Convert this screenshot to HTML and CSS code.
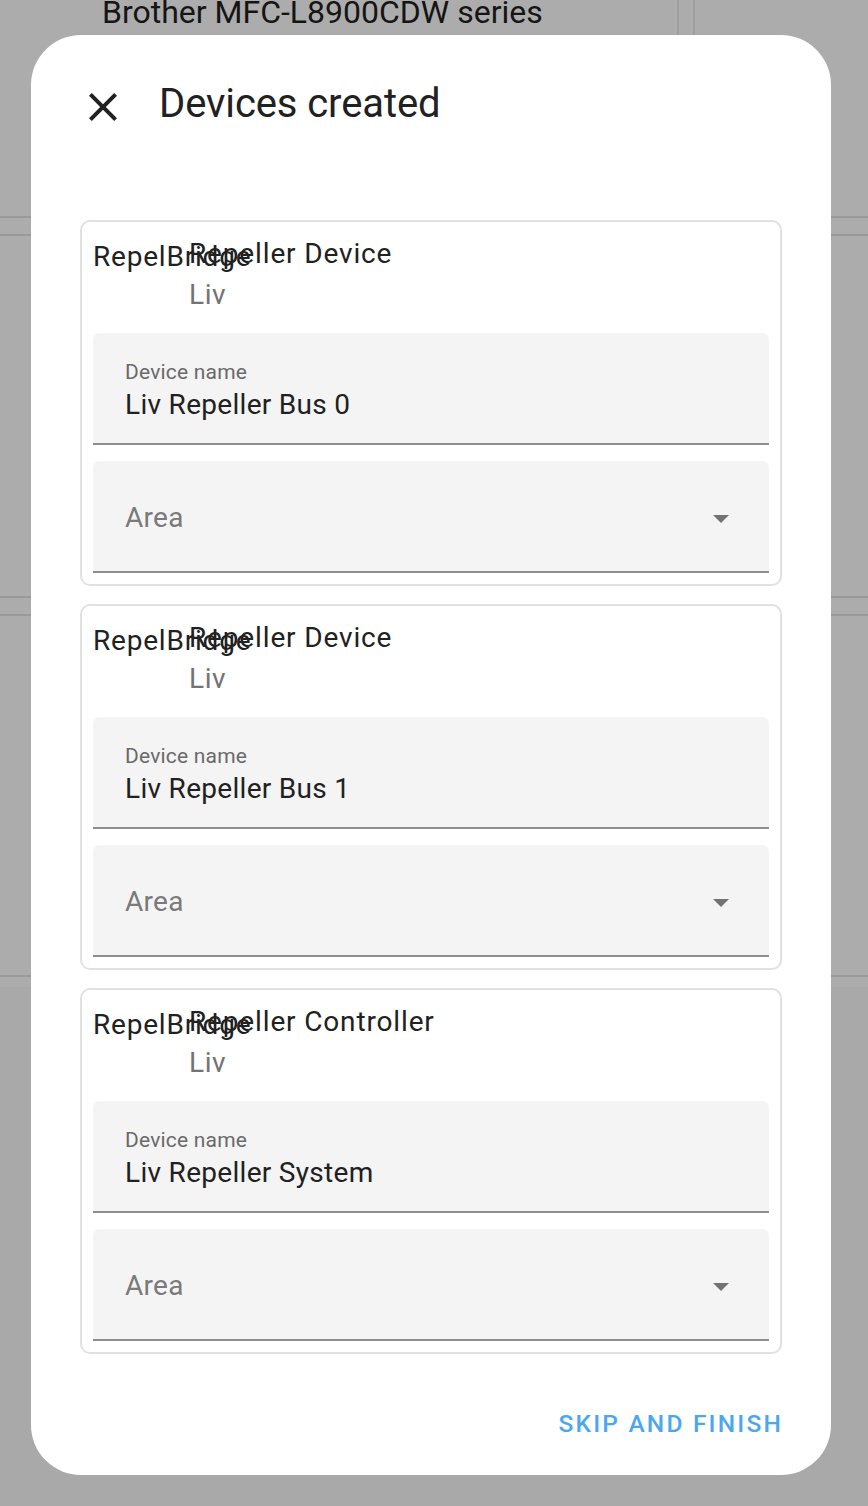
FILE: index.html
```html
<!DOCTYPE html>
<html lang="en">
<head>
<meta charset="utf-8">
<title>Devices created</title>
<link rel="stylesheet" href="styles.css">
</head>
<body>
<div class="page">
  <div class="bg-top">
    <div class="bg-cell-main"><span class="bg-title">Brother MFC-L8900CDW series</span></div>
    <div class="bg-cell-gap"></div>
    <div class="bg-cell-rest"></div>
  </div>
  <div class="bg-spacer"></div>
  <div class="bg-block bg-block-a"></div>
  <div class="bg-spacer"></div>
  <div class="bg-block bg-block-b"></div>
  <div class="bg-rest"></div>
</div>

<div class="dialog">
  <div class="dialog-header">
    <svg class="close-icon" viewBox="0 0 24 24" width="48" height="48"><path d="M19,6.41L17.59,5L12,10.59L6.41,5L5,6.41L10.59,12L5,17.59L6.41,19L12,13.41L17.59,19L19,17.59L13.41,12L19,6.41Z"/></svg>
    <h2 class="dialog-title">Devices created</h2>
  </div>

  <div class="dialog-content">
    <div class="device-card">
      <div class="card-head">
        <div class="graphic">RepelBridge</div>
        <div class="head-text">
          <div class="primary">Repeller Device</div>
          <div class="secondary">Liv</div>
        </div>
      </div>
      <div class="field">
        <div class="field-label">Device name</div>
        <div class="field-value">Liv Repeller Bus 0</div>
      </div>
      <div class="field field-select">
        <div class="select-label">Area</div>
        <svg class="caret" viewBox="0 0 16 8" width="16" height="8"><polygon points="0,0 16,0 8,8"/></svg>
      </div>
    </div>

    <div class="device-card">
      <div class="card-head">
        <div class="graphic">RepelBridge</div>
        <div class="head-text">
          <div class="primary">Repeller Device</div>
          <div class="secondary">Liv</div>
        </div>
      </div>
      <div class="field">
        <div class="field-label">Device name</div>
        <div class="field-value">Liv Repeller Bus 1</div>
      </div>
      <div class="field field-select">
        <div class="select-label">Area</div>
        <svg class="caret" viewBox="0 0 16 8" width="16" height="8"><polygon points="0,0 16,0 8,8"/></svg>
      </div>
    </div>

    <div class="device-card">
      <div class="card-head">
        <div class="graphic">RepelBridge</div>
        <div class="head-text">
          <div class="primary">Repeller Controller</div>
          <div class="secondary">Liv</div>
        </div>
      </div>
      <div class="field">
        <div class="field-label">Device name</div>
        <div class="field-value">Liv Repeller System</div>
      </div>
      <div class="field field-select">
        <div class="select-label">Area</div>
        <svg class="caret" viewBox="0 0 16 8" width="16" height="8"><polygon points="0,0 16,0 8,8"/></svg>
      </div>
    </div>
  </div>

  <div class="dialog-actions">
    <button class="text-button">SKIP AND FINISH</button>
  </div>
</div>
</body>
</html>
```

FILE: styles.css
```css
* { box-sizing: border-box; }

html, body {
  margin: 0;
  padding: 0;
}

body {
  width: 868px;
  height: 1506px;
  overflow: hidden;
  background: #a9a9a9;
  font-family: Roboto, "Noto Sans", sans-serif;
  position: relative;
}

/* ---------- background page (dimmed) ---------- */
.page {
  width: 868px;
  background: #acacac;
}

.bg-top {
  display: flex;
  height: 218px;
  border-bottom: 2px solid #9a9a9a;
}

.bg-cell-main {
  width: 679px;
  border-right: 2px solid #9e9e9e;
  padding-left: 102px;
}

.bg-cell-gap {
  width: 16px;
  border-right: 2px solid #9e9e9e;
}

.bg-cell-rest {
  flex: 1;
}

.bg-title {
  display: block;
  margin-top: -6px;
  font-size: 32px;
  line-height: 36px;
  color: #151515;
  white-space: nowrap;
}

.bg-spacer {
  height: 18px;
  border-bottom: 2px solid #9a9a9a;
}

.bg-block-a {
  height: 362px;
  border-bottom: 2px solid #9a9a9a;
}

.bg-block-b {
  height: 361px;
  border-bottom: 2px solid #9a9a9a;
}

.bg-rest {
  height: 10px;
}

/* ---------- dialog ---------- */
.dialog {
  position: absolute;
  left: 31px;
  top: 35px;
  width: 800px;
  height: 1440px;
  background: #ffffff;
  border-radius: 50px;
  display: flex;
  flex-direction: column;
  padding: 0 49px;
}

.dialog-header {
  display: flex;
  align-items: flex-start;
  margin-top: 45px;
  height: 48px;
}

.close-icon {
  fill: #212121;
  margin-top: 3px;
  margin-left: -1px;
  flex: none;
}

.dialog-title {
  margin: 0 0 0 32px;
  font-size: 40px;
  line-height: 48px;
  font-weight: 400;
  color: #212121;
  letter-spacing: -0.1px;
}

.dialog-content {
  margin-top: 92px;
  display: flex;
  flex-direction: column;
  gap: 18px;
}

/* ---------- device card ---------- */
.device-card {
  height: 366px;
  border: 2px solid #e1e1e1;
  border-radius: 10px;
  padding: 0 11px 11px;
  display: flex;
  flex-direction: column;
}

.card-head {
  height: 111px;
  display: flex;
  padding-top: 12px;
}

.graphic {
  width: 96px;
  flex: none;
  font-size: 28px;
  line-height: 40px;
  margin-top: 3px;
  color: #212121;
  letter-spacing: 0.8px;
  white-space: nowrap;
  overflow: visible;
}

.head-text {
  display: flex;
  flex-direction: column;
  gap: 1px;
}

.primary {
  font-size: 28px;
  line-height: 40px;
  color: #212121;
  letter-spacing: 0.85px;
  white-space: nowrap;
}

.secondary {
  font-size: 28px;
  line-height: 40px;
  color: #737373;
  letter-spacing: 0.6px;
}

/* ---------- text fields ---------- */
.field {
  height: 112px;
  background: #f4f4f4;
  border-radius: 7px 7px 0 0;
  border-bottom: 2px solid #8d8d8d;
  padding: 27px 30px 0 32px;
  flex: none;
}

.field + .field {
  margin-top: 16px;
}

.field-label {
  font-size: 21px;
  line-height: 24px;
  color: #6a6a6a;
  margin-bottom: 4px;
  letter-spacing: 0.2px;
}

.field-value {
  font-size: 28px;
  line-height: 34px;
  color: #212121;
  letter-spacing: 0.3px;
}

.field-select {
  display: flex;
  align-items: center;
  justify-content: space-between;
  padding: 3px 40px 0 32px;
}

.select-label {
  font-size: 28px;
  line-height: 34px;
  color: #7a7a7a;
  letter-spacing: 0.3px;
}

.caret {
  fill: #727272;
  flex: none;
  margin-top: 2px;
}

/* ---------- actions ---------- */
.dialog-actions {
  display: flex;
  justify-content: flex-end;
  margin-top: 56px;
  margin-right: -1px;
}

.text-button {
  background: none;
  border: none;
  padding: 0;
  font-family: Roboto, "Noto Sans", sans-serif;
  font-size: 24.5px;
  line-height: 28px;
  font-weight: 500;
  letter-spacing: 2.19px;
  color: #4ca7f1;
  cursor: pointer;
}
```
